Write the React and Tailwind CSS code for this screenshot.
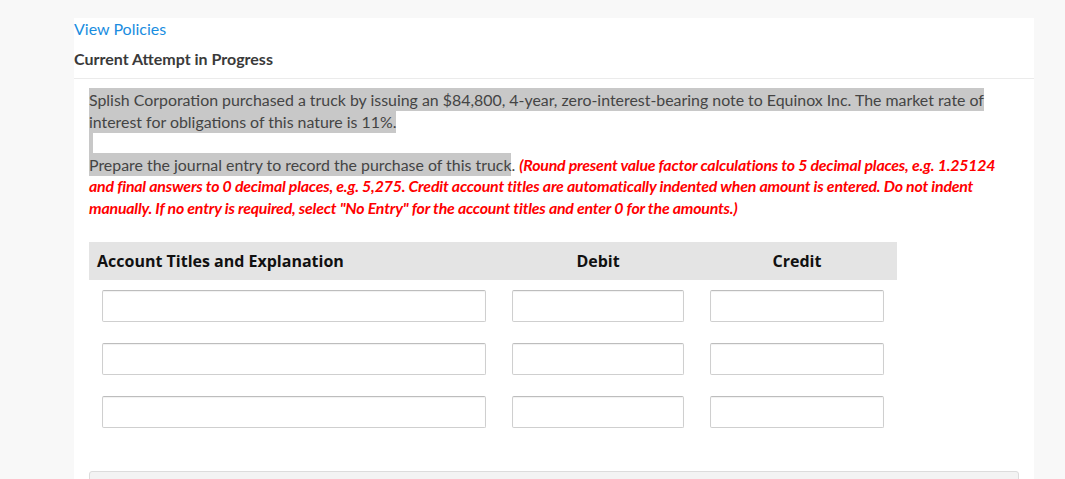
const ROWS = [0, 1, 2]

function Field({ className }) {
  return (
    <div
      className={`h-[32px] bg-white border border-[#cfcfcf] border-t-[#bdbdbd] rounded-[2px] shadow-[inset_0_1px_1px_rgba(0,0,0,0.06)] ${className}`}
    />
  )
}

export default function App() {
  return (
    <div className="h-screen bg-[#f8f8f8] pt-[18px] font-['Lato','Open_Sans',sans-serif] overflow-hidden">
      <div className="ml-[74px] w-[960px] bg-white min-h-[470px]">
        {/* Header */}
        <div className="pt-[1px]">
          <a className="block text-[16px] leading-[20px] text-[#1a8de0]">View Policies</a>
          <p className="mt-[10px] text-[16px] leading-[20px] font-bold text-[#3a3a3a]">
            Current Attempt in Progress
          </p>
        </div>
        <div className="mt-[9px] h-px bg-[#ebebeb]" />

        {/* Question */}
        <div className="pl-[15px] pr-[15px] pt-[10px] text-[15.9px] leading-[21.5px] text-[#444]">
          <p>
            <span className="bg-[#c8c8c8] py-[2px] box-decoration-clone">
              Splish Corporation purchased a truck by issuing an $84,800, 4-year, zero-interest-bearing note to Equinox Inc. The market rate of interest for obligations of this nature is 11%.
            </span>
          </p>
          <div className="h-[21.5px]">
            <div className="h-full w-[4px] bg-[#c8c8c8]" />
          </div>
          <p>
            <span className="bg-[#c8c8c8] py-[2px]">Prepare the journal entry to record the purchase of this truck</span>
            .{' '}
            <span className="text-[#ff0000] font-bold italic tracking-[-0.2px]">
              (Round present value factor calculations to 5 decimal places, e.g. 1.25124 and final answers to 0 decimal places, e.g. 5,275. Credit account titles are automatically indented when amount is entered. Do not indent manually. If no entry is required, select "No Entry" for the account titles and enter 0 for the amounts.)
            </span>
          </p>

          {/* Journal table */}
          <div className="mt-[24px] w-[808px]">
            <div className="grid grid-cols-[410px_198px_200px] h-[38px] bg-[#e4e4e4] items-center font-['Open_Sans','Noto_Sans',sans-serif] font-bold text-[16px] text-[#111]">
              <div className="pl-[8px] pt-[1px]">Account Titles and Explanation</div>
              <div className="text-center pt-[1px]">Debit</div>
              <div className="text-center pt-[1px]">Credit</div>
            </div>
            <div className="pt-[10px] flex flex-col gap-[21px]">
              {ROWS.map((r) => (
                <div key={r} className="grid grid-cols-[410px_198px_200px]">
                  <div className="px-[13px]"><Field /></div>
                  <div className="px-[13px]"><Field /></div>
                  <div className="px-[13px]"><Field /></div>
                </div>
              ))}
            </div>
          </div>

          {/* Next section */}
          <div className="mt-[43px] h-[40px] w-[930px] bg-[#f3f3f3] border border-[#dcdcdc] rounded-t-[3px]" />
        </div>
      </div>
    </div>
  )
}
